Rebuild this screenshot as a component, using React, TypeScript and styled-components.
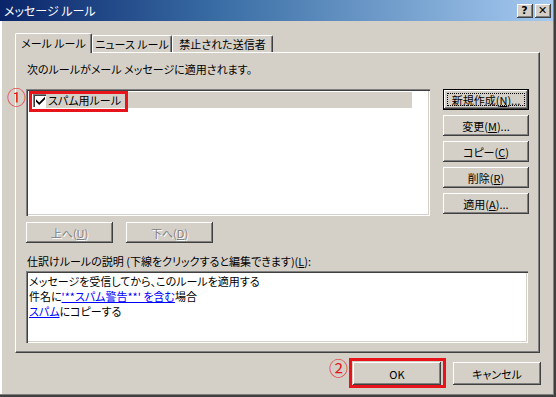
import React from "react";
import styled, { createGlobalStyle, css } from "styled-components";

const Global = createGlobalStyle`
  html, body { margin: 0; padding: 0; background: #D4D0C8; }
  body { font-family: "Noto Sans CJK JP", "Noto Sans", sans-serif; }
  * { box-sizing: border-box; }
`;

const FACE = "#D4D0C8";
const font = css`
  font-family: "Noto Sans CJK JP", "Noto Sans", sans-serif;
  font-size: 11px;
  line-height: 14px;
  font-feature-settings: "palt";
  color: #000;
`;

const Window = styled.div`
  position: relative;
  width: 556px;
  height: 397px;
  background: ${FACE};
  box-shadow: inset -2px -2px #404040, inset -3px -3px #808080, inset 2px 0 #fff;
  display: flex;
  flex-direction: column;
  overflow: hidden;
`;

const TitleBar = styled.div`
  height: 21px;
  margin-right: 3px;
  background: linear-gradient(to right, #0A246A, #3A6EA5 40%, #A6CAF0);
  display: flex;
  align-items: center;
  justify-content: space-between;
  padding: 0 2px 0 4px;
`;

const Title = styled.div`
  ${font};
  font-size: 12px;
  color: #fff;
`;

const CaptionButtons = styled.div`
  display: flex;
  gap: 2px;
`;

const CapBtn = styled.div`
  width: 16px;
  height: 14px;
  background: ${FACE};
  box-shadow: inset -1px -1px #404040, inset 1px 1px #fff, inset -2px -2px #808080;
  display: flex;
  align-items: center;
  justify-content: center;
  font-family: "DejaVu Sans", sans-serif;
  font-weight: 700;
  font-size: 11px;
  line-height: 11px;
  color: #000;
  padding: 0 1px 1px 0;
`;

const Body = styled.div`
  flex: 1;
  padding: 12px 15px 0 15px;
  display: flex;
  flex-direction: column;
`;

const TabStrip = styled.div`
  height: 19px;
  display: flex;
  align-items: flex-end;
`;

const Tab = styled.div<{ $active?: boolean; $w: number }>`
  ${font};
  width: ${(p) => p.$w}px;
  height: ${(p) => (p.$active ? 20 : 17)}px;
  margin-bottom: ${(p) => (p.$active ? -1 : 0)}px;
  position: relative;
  z-index: ${(p) => (p.$active ? 2 : 0)};
  background: ${FACE};
  border-top: 1px solid #fff;
  border-left: 1px solid #fff;
  border-right: 1px solid #404040;
  box-shadow: inset -1px 0 #808080;
  border-top-left-radius: 2px;
  border-top-right-radius: 2px;
  display: flex;
  align-items: center;
  justify-content: center;
  padding-bottom: ${(p) => (p.$active ? 1 : 0)}px;
  white-space: nowrap;
`;

const Panel = styled.div`
  width: 525px;
  height: 301px;
  border: 1px solid;
  border-color: #fff #404040 #404040 #fff;
  box-shadow: inset -1px -1px #808080;
  padding: 9px 10px 0 10px;
  display: flex;
  flex-direction: column;
  position: relative;
  z-index: 1;
`;

const Caption = styled.div`
  ${font};
  margin-left: 1px;
  white-space: nowrap;
`;

const RulesRow = styled.div`
  margin-top: 13px;
  display: flex;
  gap: 13px;
`;

const sunken = css`
  background: #fff;
  box-shadow: inset 1px 1px #808080, inset 2px 2px #404040, inset -1px -1px #fff, inset -2px -2px ${FACE};
`;

const ListBox = styled.div`
  ${sunken};
  width: 404px;
  height: 127px;
  padding: 3px 2px 2px 2px;
`;

const RuleItem = styled.div`
  height: 16px;
  display: flex;
  align-items: center;
  padding-left: 5px;
`;

const CheckBox = styled.div`
  width: 13px;
  height: 13px;
  flex: none;
  background: #fff;
  box-shadow: inset 1px 1px #808080, inset 2px 2px #404040, inset -1px -1px #fff;
  display: flex;
  align-items: center;
  justify-content: center;
`;

const RuleLabel = styled.div`
  ${font};
  width: 366px;
  height: 16px;
  background: ${FACE};
  padding-left: 2px;
  display: flex;
  align-items: center;
`;

const SideButtons = styled.div`
  display: flex;
  flex-direction: column;
  gap: 5px;
`;

const Btn = styled.div<{ $w: number; $h: number; $default?: boolean; $disabled?: boolean }>`
  ${font};
  position: relative;
  width: ${(p) => p.$w}px;
  height: ${(p) => p.$h}px;
  background: ${FACE};
  display: flex;
  align-items: center;
  justify-content: center;
  white-space: nowrap;
  box-shadow: inset -1px -1px #404040, inset 1px 1px #fff, inset -2px -2px #808080;
  ${(p) =>
    p.$default &&
    css`
      border: 1px solid #000;
      &::after {
        content: "";
        position: absolute;
        inset: 3px;
        border: 1px dotted #000;
      }
    `}
  ${(p) =>
    p.$disabled &&
    css`
      color: #808080;
      text-shadow: 1px 1px #fff;
    `}
`;

const U = styled.span`
  text-decoration: underline;
  text-underline-offset: 1px;
`;

const MoveRow = styled.div`
  margin-top: 6px;
  display: flex;
  gap: 13px;
`;

const Label = styled.div`
  ${font};
  margin-top: 11px;
  margin-left: 1px;
  white-space: nowrap;
`;

const DescBox = styled.div`
  ${sunken};
  margin-top: 3px;
  width: 502px;
  height: 72px;
  padding: 3px 3px;
  display: flex;
  flex-direction: column;
`;

const DescLine = styled.div`
  ${font};
  line-height: 15px;
  white-space: nowrap;
`;

const Link = styled.span`
  color: #0000ff;
  text-decoration: underline;
`;

const Footer = styled.div`
  margin-top: 9px;
  display: flex;
  justify-content: flex-end;
  gap: 12px;
`;

const RedBox = styled.div`
  position: absolute;
  border: 3px solid #e8141b;
  z-index: 5;
  pointer-events: none;
`;

const Marker = styled.div`
  position: absolute;
  z-index: 5;
  font-family: "Noto Sans CJK JP", sans-serif;
  font-size: 19px;
  line-height: 19px;
  color: #e8141b;
`;

const Check = () => (
  <svg width="9" height="9" viewBox="0 0 7 7" style={{ marginLeft: 1, marginTop: 1 }}>
    <path d="M0 2.5 L2.5 5 L7 0.5 L7 2.5 L2.5 7 L0 4.5 Z" fill="#000" />
  </svg>
);

export default function App() {
  return (
    <>
      <Global />
      <Window>
        <TitleBar>
          <Title>メッセージ ルール</Title>
          <CaptionButtons>
            <CapBtn>?</CapBtn>
            <CapBtn>✕</CapBtn>
          </CaptionButtons>
        </TitleBar>
        <Body>
          <TabStrip>
            <Tab $active $w={77}>メール ルール</Tab>
            <Tab $w={80}>ニュース ルール</Tab>
            <Tab $w={101}>禁止された送信者</Tab>
          </TabStrip>
          <Panel>
            <Caption>次のルールがメール メッセージに適用されます。</Caption>
            <RulesRow>
              <ListBox>
                <RuleItem>
                  <CheckBox>
                    <Check />
                  </CheckBox>
                  <RuleLabel>スパム用ルール</RuleLabel>
                </RuleItem>
              </ListBox>
              <SideButtons>
                <Btn $w={86} $h={21} $default>
                  新規作成(<U>N</U>)...
                </Btn>
                <Btn $w={86} $h={21}>
                  変更(<U>M</U>)...
                </Btn>
                <Btn $w={86} $h={21}>
                  コピー(<U>C</U>)
                </Btn>
                <Btn $w={86} $h={21}>
                  削除(<U>R</U>)
                </Btn>
                <Btn $w={86} $h={21}>
                  適用(<U>A</U>)...
                </Btn>
              </SideButtons>
            </RulesRow>
            <MoveRow>
              <Btn $w={87} $h={21} $disabled>
                上へ(<U>U</U>)
              </Btn>
              <Btn $w={87} $h={21} $disabled>
                下へ(<U>D</U>)
              </Btn>
            </MoveRow>
            <Label>
              仕訳けルールの説明 (下線をクリックすると編集できます)(<U>L</U>):
            </Label>
            <DescBox>
              <DescLine>メッセージを受信してから、このルールを適用する</DescLine>
              <DescLine>
                件名に<Link>'**スパム警告**' を含む</Link>場合
              </DescLine>
              <DescLine>
                <Link>スパム</Link>にコピーする
              </DescLine>
            </DescBox>
          </Panel>
          <Footer>
            <Btn $w={88} $h={23}>OK</Btn>
            <Btn $w={88} $h={23}>キャンセル</Btn>
          </Footer>
        </Body>
        <Marker style={{ left: 7, top: 87 }}>①</Marker>
        <RedBox style={{ left: 29, top: 91, width: 99, height: 21 }} />
        <Marker style={{ left: 329, top: 358 }}>②</Marker>
        <RedBox style={{ left: 349, top: 358, width: 97, height: 30 }} />
      </Window>
    </>
  );
}
